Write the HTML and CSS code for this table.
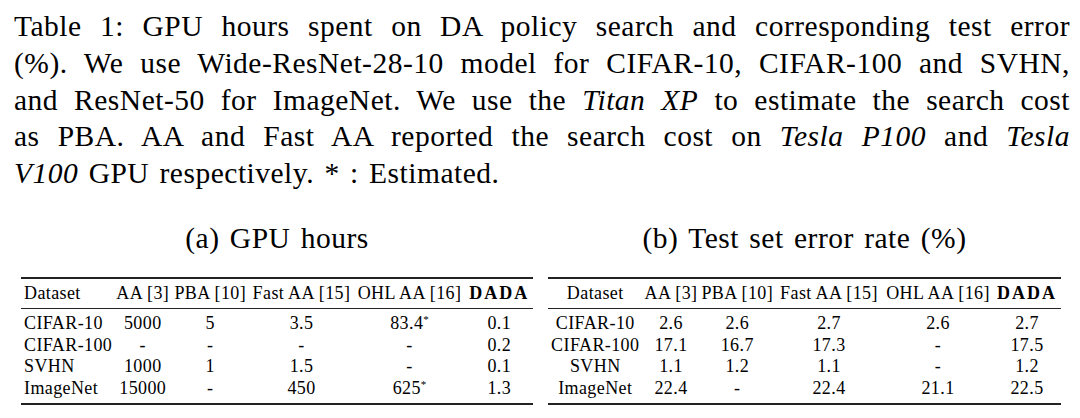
FILE: index.html
```html
<!DOCTYPE html>
<html lang="en">
<head>
<meta charset="utf-8">
<title>Table 1</title>
<link rel="stylesheet" href="styles.css">
</head>
<body>
<div class="page">
  <p class="caption">
    <span class="ln">Table 1: GPU hours spent on DA policy search and corresponding test error</span>
    <span class="ln">(%). We use Wide-ResNet-28-10 model for CIFAR-10, CIFAR-100 and SVHN,</span>
    <span class="ln">and ResNet-50 for ImageNet. We use the <i>Titan XP</i> to estimate the search cost</span>
    <span class="ln">as PBA. AA and Fast AA reported the search cost on <i>Tesla P100</i> and <i>Tesla</i></span>
    <span class="ln last"><i>V100</i> GPU respectively. * : Estimated.</span>
  </p>
  <div class="subs">
    <div class="sub sub-a">
      <div class="subcap">(a) GPU hours</div>
      <div class="tbl">
        <div class="head">
          <div class="row"><span class="c1">Dataset</span><span>AA [3]</span><span>PBA [10]</span><span>Fast AA [15]</span><span>OHL AA [16]</span><span class="b">DADA</span></div>
        </div>
        <div class="body">
          <div class="row"><span class="c1">CIFAR-10</span><span>5000</span><span>5</span><span>3.5</span><span>83.4<sup>*</sup></span><span>0.1</span></div>
          <div class="row"><span class="c1">CIFAR-100</span><span>-</span><span>-</span><span>-</span><span>-</span><span>0.2</span></div>
          <div class="row"><span class="c1">SVHN</span><span>1000</span><span>1</span><span>1.5</span><span>-</span><span>0.1</span></div>
          <div class="row"><span class="c1">ImageNet</span><span>15000</span><span>-</span><span>450</span><span>625<sup>*</sup></span><span>1.3</span></div>
        </div>
      </div>
    </div>
    <div class="sub sub-b">
      <div class="subcap">(b) Test set error rate (%)</div>
      <div class="tbl">
        <div class="head">
          <div class="row"><span>Dataset</span><span>AA [3]</span><span>PBA [10]</span><span>Fast AA [15]</span><span>OHL AA [16]</span><span class="b">DADA</span></div>
        </div>
        <div class="body">
          <div class="row"><span>CIFAR-10</span><span>2.6</span><span>2.6</span><span>2.7</span><span>2.6</span><span>2.7</span></div>
          <div class="row"><span>CIFAR-100</span><span>17.1</span><span>16.7</span><span>17.3</span><span>-</span><span>17.5</span></div>
          <div class="row"><span>SVHN</span><span>1.1</span><span>1.2</span><span>1.1</span><span>-</span><span>1.2</span></div>
          <div class="row"><span>ImageNet</span><span>22.4</span><span>-</span><span>22.4</span><span>21.1</span><span>22.5</span></div>
        </div>
      </div>
    </div>
  </div>
</div>
</body>
</html>
```

FILE: styles.css
```css
* { box-sizing: border-box; }

html, body {
  margin: 0;
  padding: 0;
  background: #ffffff;
}

body {
  font-family: "Liberation Serif", "Times New Roman", serif;
  color: #000;
}

.page {
  width: 1080px;
  height: 418px;
  padding: 8px 10px 0 14px;
  overflow: hidden;
}

.caption {
  margin: 0;
  width: 1056px;
  font-size: 29.5px;
  line-height: 36.75px;
  letter-spacing: 0.5px;
  word-spacing: 2.5px;
}

.caption .ln {
  display: block;
  text-align: justify;
  text-align-last: justify;
}

.caption .ln.last {
  text-align: left;
  text-align-last: left;
}

.subs {
  display: flex;
  gap: 15px;
  margin-top: 30.6px;
  padding-left: 7px;
}

.sub-a { width: 512px; }
.sub-b { width: 513px; }

.subcap {
  text-align: center;
  font-size: 29.5px;
  line-height: 32px;
  letter-spacing: 0.5px;
  word-spacing: 2.5px;
  height: 32px;
  white-space: nowrap;
}

.tbl {
  margin-top: 22.4px;
  border-top: 2px solid #222;
  border-bottom: 2px solid #222;
  font-size: 18px;
  letter-spacing: 0.4px;
}

.head {
  padding: 3px 0 4px;
  border-bottom: 1px solid #222;
}

.head .row { line-height: 22px; }

.body {
  padding: 4.2px 0 4.2px;
}

.row {
  display: grid;
  line-height: 21.6px;
  white-space: nowrap;
}

.sub-a .row { grid-template-columns: 93.5px 56.5px 78.5px 104px 112px 67.5px; }
.sub-b .row { grid-template-columns: 94.5px 57px 75.5px 108px 110px 68px; }

.row span {
  text-align: center;
}

.sub-a .row .c1 {
  text-align: left;
  padding-left: 3px;
}

.b {
  font-weight: bold;
  letter-spacing: 2px;
}

sup {
  font-size: 11px;
  line-height: 0;
  vertical-align: 6px;
  letter-spacing: 0;
}
```
